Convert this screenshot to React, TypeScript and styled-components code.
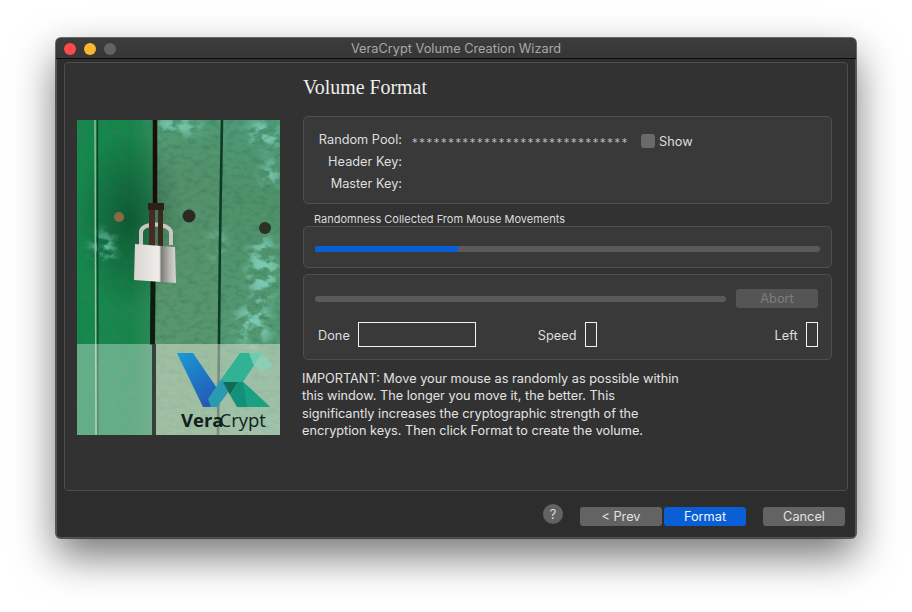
import styled, { createGlobalStyle } from "styled-components";

const GlobalStyle = createGlobalStyle`
  html, body {
    margin: 0;
    padding: 0;
    background: #ffffff;
  }
  body {
    width: 912px;
    height: 612px;
    overflow: hidden;
    font-family: Inter, "Liberation Sans", sans-serif;
  }
`;

const Page = styled.div`
  padding: 38px 0 0 56px;
`;

const Window = styled.div`
  box-sizing: border-box;
  width: 800px;
  height: 500px;
  display: flex;
  flex-direction: column;
  background: #2d2d2d;
  border-radius: 5px;
  box-shadow: 0 0 0 1px rgba(0, 0, 0, 0.55), inset 0 0 0 1px #555555,
    0 18px 42px rgba(0, 0, 0, 0.55);
  overflow: hidden;
`;

const TitleBar = styled.div`
  position: relative;
  flex: none;
  height: 20px;
  display: flex;
  align-items: center;
  justify-content: center;
  background: linear-gradient(#3c3c3c, #363636);
  border-bottom: 1px solid #0c0c0c;
  color: #a8a8a8;
  font-size: 12.75px;
`;

const Lights = styled.div`
  position: absolute;
  left: 8px;
  top: 5px;
  display: flex;
  gap: 8px;
`;

const Light = styled.span<{ $color: string }>`
  width: 12px;
  height: 12px;
  border-radius: 50%;
  background: ${(p) => p.$color};
`;

const Panel = styled.div`
  box-sizing: border-box;
  flex: none;
  display: flex;
  width: 784px;
  height: 429px;
  margin: 3px 0 0 8px;
  padding: 0 15px 0 12px;
  gap: 23px;
  background: #323232;
  border: 1px solid #4d4d4d;
  border-radius: 4px;
`;

const PhotoColumn = styled.div`
  flex: none;
  width: 203px;
  padding-top: 57px;
`;

const Content = styled.div`
  flex: 1;
  min-width: 0;
`;

const Heading = styled.h1`
  margin: 0;
  height: 53px;
  padding-top: 12px;
  box-sizing: border-box;
  font: 400 19.9px/24px "Liberation Serif", serif;
  color: #eeeeee;
`;

const Group = styled.div<{ $height: number }>`
  box-sizing: border-box;
  height: ${(p) => p.$height}px;
  background: #393939;
  border: 1px solid #4e4e4e;
  border-radius: 5px;
`;

const KeysGroup = styled(Group)`
  padding: 11px 0 0 14px;
  display: grid;
  grid-template-columns: 84px 239px auto;
  grid-auto-rows: 22px;
  column-gap: 0;
  align-items: center;
`;

const KeyLabel = styled.div`
  text-align: right;
  font-size: 12.75px;
  color: #dedede;
`;

const Stars = styled.div`
  padding: 8px 0 0 10px;
  font: 400 11px/12px "DejaVu Sans", sans-serif;
  letter-spacing: 1.73px;
  color: #c8c8c8;
  white-space: nowrap;
`;

const ShowToggle = styled.label`
  display: flex;
  align-items: center;
  gap: 4px;
  font-size: 12.75px;
  color: #dedede;
  padding-top: 4px;
`;

const Check = styled.span`
  width: 14px;
  height: 14px;
  border-radius: 3px;
  background: #6a6a6a;
`;

const GroupCaption = styled.div`
  height: 22px;
  padding: 8px 0 0 11px;
  box-sizing: border-box;
  font-size: 11px;
  line-height: 14px;
  color: #dcdcdc;
`;

const RandomGroup = styled(Group)`
  padding: 19px 11px 0 11px;
`;

const Track = styled.div`
  height: 6px;
  flex: 1;
  background: #5a5a5a;
  border-radius: 3px;
  overflow: hidden;
`;

const Fill = styled.div`
  height: 100%;
  background: #0a5fd6;
`;

const ProgressGroup = styled(Group)`
  margin-top: 6px;
  padding: 14px 13px 0 11px;
`;

const ProgressRow = styled.div`
  display: flex;
  align-items: center;
  gap: 10px;
  height: 19px;
`;

const AbortButton = styled.div`
  flex: none;
  width: 82px;
  height: 19px;
  display: flex;
  align-items: center;
  justify-content: center;
  border-radius: 3px;
  background: #555555;
  color: #7d7d7d;
  font-size: 12.75px;
`;

const StatusRow = styled.div`
  display: flex;
  align-items: center;
  margin-top: 14px;
  height: 25px;
  padding-left: 3px;
  font-size: 12.75px;
  color: #dedede;
`;

const StatusLabel = styled.span<{ $gap: number }>`
  margin: 2px ${(p) => p.$gap}px 0 0;
`;

const ValueBox = styled.div<{ $width: number; $after: number }>`
  box-sizing: border-box;
  flex: none;
  width: ${(p) => p.$width}px;
  height: 25px;
  margin-right: ${(p) => p.$after}px;
  border: 1px solid #f2f2f2;
`;

const Notice = styled.p`
  margin: 10px 0 0 -1px;
  width: 400px;
  font-size: 12.72px;
  line-height: 17.4px;
  color: #e2e2e2;
`;

const Footer = styled.div`
  flex: 1;
  display: flex;
  align-items: center;
  padding: 4px 11px 0 487px;
`;

const HelpButton = styled.div`
  flex: none;
  width: 20px;
  height: 20px;
  margin: -5px 17px 0 0;
  display: flex;
  align-items: center;
  justify-content: center;
  border-radius: 50%;
  background: #626262;
  color: #dddddd;
  font-size: 12.75px;
`;

const Button = styled.div<{ $primary?: boolean; $gap?: number }>`
  flex: none;
  width: 82px;
  height: 19px;
  margin-left: ${(p) => p.$gap ?? 0}px;
  display: flex;
  align-items: center;
  justify-content: center;
  border-radius: 3px;
  background: ${(p) => (p.$primary ? "#0a5fd6" : "#636363")};
  color: ${(p) => (p.$primary ? "#f0f4fa" : "#e2e2e2")};
  font-size: 12.75px;
`;

const PhotoSvg = styled.svg`
  display: block;
  width: 203px;
  height: 315px;
`;

function LockPhoto() {
  return (
    <PhotoSvg viewBox="0 0 203 315">
      <defs>
        <linearGradient id="plankA" x1="0" y1="0" x2="1" y2="0">
          <stop offset="0" stopColor="#14894c" />
          <stop offset="0.7" stopColor="#16854a" />
          <stop offset="1" stopColor="#2c8c58" />
        </linearGradient>
        <linearGradient id="plankB" x1="0" y1="0" x2="0" y2="1">
          <stop offset="0" stopColor="#4f9a72" />
          <stop offset="0.18" stopColor="#54916a" />
          <stop offset="1" stopColor="#5c9a70" />
        </linearGradient>
        <linearGradient id="plankC" x1="0" y1="0" x2="0" y2="1">
          <stop offset="0" stopColor="#4f9a78" />
          <stop offset="0.25" stopColor="#4f9168" />
          <stop offset="0.75" stopColor="#549a74" />
          <stop offset="1" stopColor="#5c9f7a" />
        </linearGradient>
        <linearGradient id="steel" x1="0" y1="0" x2="1" y2="0">
          <stop offset="0" stopColor="#d9d6d2" />
          <stop offset="0.6" stopColor="#efeeea" />
          <stop offset="0.65" stopColor="#7c7c78" />
          <stop offset="0.85" stopColor="#b9b8b4" />
          <stop offset="1" stopColor="#d7d7d2" />
        </linearGradient>
        <linearGradient id="logoBlue" x1="0" y1="0" x2="0.6" y2="1">
          <stop offset="0" stopColor="#1a9ad6" />
          <stop offset="1" stopColor="#2559b4" />
        </linearGradient>
        <radialGradient id="lockShade" cx="0.5" cy="0.5" r="0.5">
          <stop offset="0" stopColor="#05301c" stopOpacity="0.5" />
          <stop offset="1" stopColor="#05301c" stopOpacity="0" />
        </radialGradient>
        <filter id="grain" x="0" y="0" width="100%" height="100%">
          <feTurbulence type="fractalNoise" baseFrequency="0.12 0.2" numOctaves="4" seed="7" />
          <feColorMatrix values="0 0 0 0 0.04  0 0 0 0 0.2  0 0 0 0 0.12  2.4 0 0 0 -1.1" />
        </filter>
        <filter id="specks" x="0" y="0" width="100%" height="100%">
          <feTurbulence type="fractalNoise" baseFrequency="0.07 0.1" numOctaves="4" seed="21" />
          <feColorMatrix values="0 0 0 0 0.24  0 0 0 0 0.68  0 0 0 0 0.56  5 0 0 0 -2.2" />
        </filter>
        <filter id="soft">
          <feGaussianBlur stdDeviation="0.5" />
        </filter>
        <filter id="wide">
          <feGaussianBlur stdDeviation="6" />
        </filter>
        <mask id="wear">
          <g filter="url(#wide)" fill="#c8c8c8">
            <ellipse cx="100" cy="6" rx="26" ry="9" />
            <ellipse cx="188" cy="14" rx="18" ry="14" />
            <ellipse cx="194" cy="55" rx="9" ry="16" />
            <ellipse cx="26" cy="128" rx="11" ry="16" />
            <ellipse cx="186" cy="150" rx="16" ry="34" />
            <ellipse cx="176" cy="205" rx="18" ry="22" />
            <ellipse cx="140" cy="125" rx="7" ry="14" />
          </g>
        </mask>
      </defs>

      <rect width="203" height="315" fill="url(#plankC)" />
      <polygon points="0,0 78,0 76,315 0,315" fill="url(#plankA)" />
      <polygon points="78,0 145,0 142,315 76,315" fill="url(#plankB)" />
      <rect width="203" height="315" filter="url(#grain)" opacity="0.6" />
      <ellipse cx="52" cy="100" rx="55" ry="90" fill="url(#lockShade)" />
      <g mask="url(#wear)">
        <rect width="203" height="315" filter="url(#specks)" />
      </g>

      <g filter="url(#soft)">
        <polyline points="78,0 78,90" stroke="#1a0f0c" strokeWidth="4.5" fill="none" />
        <polyline points="76,160 75.5,225" stroke="#081b10" strokeWidth="5" fill="none" />
        <polyline points="145,0 143,120 141,315" stroke="#0b3a26" strokeWidth="2.6" fill="none" />
        <polyline points="18,0 19,315" stroke="#8fc4a0" strokeWidth="1.4" fill="none" />
        <polyline points="20.5,0 21,315" stroke="#123c28" strokeWidth="1.2" fill="none" />
        <circle cx="42" cy="97" r="5" fill="#8a6a42" />
        <circle cx="112" cy="96" r="6.5" fill="#2a2a20" />
        <circle cx="188" cy="108" r="6" fill="#2c3026" />
      </g>

      <g filter="url(#soft)">
        <path d="M64 125 V 112 C 64 102 92 102 94 112 V 125" fill="none" stroke="#c9c6c2" strokeWidth="4" />
        <rect x="72" y="84" width="6" height="44" fill="#4a2c20" />
        <rect x="81" y="84" width="5" height="44" fill="#3a2a1e" />
        <rect x="71" y="83" width="16" height="7" fill="#2b2019" />
        <polygon points="58,124 98,127 99,163 57,160" fill="url(#steel)" />
      </g>

      <rect y="224" width="203" height="91" fill="#ffffff" opacity="0.33" />
      <rect x="79" y="224" width="124" height="91" fill="#d8d2b8" opacity="0.22" />
      <rect x="75" y="224" width="4" height="91" fill="#3b3f3c" />

      <polygon points="100,233 116,233 146,277 140,287 126,287" fill="url(#logoBlue)" />
      <polygon points="131,279 145,258 153,270 140,287 134,287" fill="#2a9ab0" />
      <polygon points="145,258 163,233 185,233 166,262 146,262" fill="#2fb394" />
      <polygon points="172,233 185,233 196,246 184,252 176,244" fill="#86d6bc" opacity="0.7" />
      <polygon points="146,262 161,262 153,275" fill="#136a58" />
      <polygon points="153,275 161,262 166,262 193,287 160,287" fill="#129078" />
      <polygon points="166,262 174,269 193,287 170,287" fill="#1aa184" />
      <text x="104" y="307" fontFamily="'Open Sans', sans-serif" fontSize="18.5" fill="#10201a">
        <tspan fontWeight="700">Vera</tspan>
        <tspan fontWeight="400" dx="-4">Crypt</tspan>
      </text>
    </PhotoSvg>
  );
}

export default function App() {
  return (
    <Page>
      <GlobalStyle />
      <Window>
        <TitleBar>
          <Lights>
            <Light $color="#fc4a48" />
            <Light $color="#fdb52f" />
            <Light $color="#626264" />
          </Lights>
          VeraCrypt Volume Creation Wizard
        </TitleBar>
        <Panel>
          <PhotoColumn>
            <LockPhoto />
          </PhotoColumn>
          <Content>
            <Heading>Volume Format</Heading>
            <KeysGroup $height={88}>
              <KeyLabel>Random Pool:</KeyLabel>
              <Stars>{"*".repeat(30)}</Stars>
              <ShowToggle>
                <Check />
                Show
              </ShowToggle>
              <KeyLabel>Header Key:</KeyLabel>
              <span />
              <span />
              <KeyLabel>Master Key:</KeyLabel>
            </KeysGroup>
            <GroupCaption>Randomness Collected From Mouse Movements</GroupCaption>
            <RandomGroup $height={42}>
              <Track>
                <Fill style={{ width: "28.3%" }} />
              </Track>
            </RandomGroup>
            <ProgressGroup $height={86}>
              <ProgressRow>
                <Track />
                <AbortButton>Abort</AbortButton>
              </ProgressRow>
              <StatusRow>
                <StatusLabel $gap={8}>Done</StatusLabel>
                <ValueBox $width={118} $after={62} />
                <StatusLabel $gap={8}>Speed</StatusLabel>
                <ValueBox $width={12} $after={178} />
                <StatusLabel $gap={8}>Left</StatusLabel>
                <ValueBox $width={12} $after={0} />
              </StatusRow>
            </ProgressGroup>
            <Notice>
              IMPORTANT: Move your mouse as randomly as possible within
              <br />
              this window. The longer you move it, the better. This
              <br />
              significantly increases the cryptographic strength of the
              <br />
              encryption keys. Then click Format to create the volume.
            </Notice>
          </Content>
        </Panel>
        <Footer>
          <HelpButton>?</HelpButton>
          <Button>&lt; Prev</Button>
          <Button $primary $gap={2}>
            Format
          </Button>
          <Button $gap={17}>Cancel</Button>
        </Footer>
      </Window>
    </Page>
  );
}
